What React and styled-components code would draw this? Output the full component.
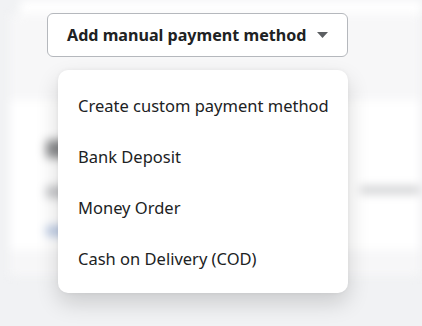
import React from "react";
import styled, { createGlobalStyle } from "styled-components";

const Global = createGlobalStyle`
  html, body { margin: 0; padding: 0; }
  body {
    background: #f1f2f4;
    font-family: "Segoe UI", "Noto Sans", "Open Sans", sans-serif;
    -webkit-font-smoothing: antialiased;
  }
`;

const Page = styled.div`
  position: relative;
  width: 422px;
  height: 326px;
  overflow: hidden;
  background: #f1f2f4;
`;

const Backdrop = styled.div`
  display: flex;
  flex-direction: column;
  filter: blur(5px);
`;

const TopStrip = styled.div`
  height: 14px;
  margin-left: 20px;
  background: #ffffff;
`;

const BlurCard = styled.div`
  margin: 0 2px 0 10px;
  height: 262px;
  background: #f7f7f8;
  display: flex;
  flex-direction: column;
  padding-top: 86px;
  box-sizing: border-box;
`;

const BlurSection = styled.div`
  background: #ffffff;
  height: 150px;
  padding: 40px 0 0 36px;
  box-sizing: border-box;
  display: flex;
  flex-direction: column;
  gap: 28px;
`;

const Blob = styled.div`
  height: ${(p) => p.$h}px;
  width: ${(p) => p.$w}px;
  background: ${(p) => p.$c};
  border-radius: 3px;
`;

const Line = styled.div`
  display: flex;
  justify-content: space-between;
`;

const ButtonWrap = styled.div`
  position: absolute;
  left: 47px;
  top: 13px;
`;

const Button = styled.button`
  display: flex;
  align-items: center;
  gap: 11px;
  width: 301px;
  height: 44px;
  box-sizing: border-box;
  padding: 0 20px 0 19px;
  background: #ffffff;
  border: 1px solid #b5b8bd;
  border-radius: 6px;
  font-family: inherit;
  font-size: 16.1px;
  font-weight: 700;
  color: #202223;
  cursor: pointer;
`;

const Label = styled.span`
  text-align: left;
  white-space: nowrap;
`;

const Caret = styled.svg`
  width: 11px;
  height: 6px;
  flex: none;
`;

const Menu = styled.ul`
  position: absolute;
  left: 58px;
  top: 70px;
  width: 290px;
  margin: 0;
  padding: 10px 0 9px;
  list-style: none;
  background: #ffffff;
  border-radius: 10px;
  box-shadow: 0 10px 22px rgba(0, 0, 0, 0.16), 0 0 4px rgba(0, 0, 0, 0.05);
`;

const Item = styled.li`
  height: 51px;
  display: flex;
  align-items: center;
  padding-left: 20px;
  font-size: 16.5px;
  font-weight: 400;
  color: #202223;
  white-space: nowrap;
`;

const items = [
  "Create custom payment method",
  "Bank Deposit",
  "Money Order",
  "Cash on Delivery (COD)",
];

export default function App() {
  return (
    <Page>
      <Global />
      <Backdrop>
        <TopStrip />
        <BlurCard>
          <BlurSection>
            <Blob $h={18} $w={40} $c="#8a8b8d" />
            <Line>
              <Blob $h={12} $w={26} $c="#c2c3c6" />
              <Blob $h={8} $w={60} $c="#d0d1d3" />
            </Line>
            <Blob $h={10} $w={30} $c="#b6c6e2" />
          </BlurSection>
        </BlurCard>
      </Backdrop>
      <ButtonWrap>
        <Button type="button">
          <Label>Add manual payment method</Label>
          <Caret viewBox="0 0 11 6">
            <path d="M0 0h11L5.5 6z" fill="#5c5f62" />
          </Caret>
        </Button>
      </ButtonWrap>
      <Menu>
        {items.map((t) => (
          <Item key={t}>{t}</Item>
        ))}
      </Menu>
    </Page>
  );
}
